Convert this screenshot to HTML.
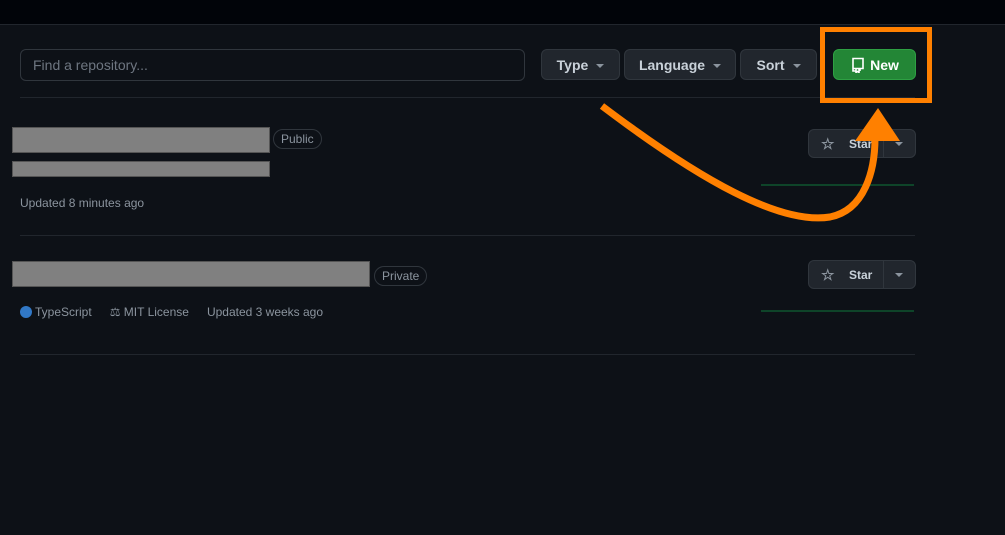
<!DOCTYPE html>
<html><head><style>
body{margin:0;width:1005px;height:535px;background:#0d1117;font-family:"Liberation Sans",sans-serif;position:relative;overflow:hidden;color:#c9d1d9}
.top{position:absolute;left:0;top:0;width:1005px;height:24px;background:#010409;border-bottom:1px solid #21262d}
.abs{position:absolute}
.inp{left:20px;top:49px;height:30px;border:1px solid #30363d;border-radius:6px;background:#0d1117;color:#6e7681;font-size:14px;line-height:30px;padding-left:12px;width:491px}
.btn{top:49px;height:31px;border:1px solid #30363d;border-radius:6px;background:#21262d;color:#c9d1d9;font-size:14px;font-weight:bold;line-height:31px;text-align:center;box-sizing:border-box}
.car{display:inline-block;width:0;height:0;border-left:4px solid transparent;border-right:4px solid transparent;border-top:4px solid #8b949e;vertical-align:middle;margin-left:8px}
.hr{height:1px;background:#21262d;left:20px;width:895px}
.gray{background:#808080;border:1px solid #555}
.badge{border:1px solid #30363d;border-radius:12px;font-size:12px;color:#8b949e;padding:0 7px;height:18px;line-height:18px}
.meta{font-size:12px;color:#8b949e}
.star{width:108px;height:29px;border:1px solid #30363d;border-radius:6px;background:#21262d;box-sizing:border-box;font-size:12px;font-weight:bold;color:#c9d1d9}
</style></head><body>
<div class="top"></div>
<div class="abs inp">Find a repository...</div>
<div class="abs btn" style="left:541px;width:79px">Type<span class="car"></span></div>
<div class="abs btn" style="left:624px;width:112px">Language<span class="car"></span></div>
<div class="abs btn" style="left:740px;width:77px">Sort<span class="car"></span></div>
<div class="abs btn" style="left:833px;width:83px;background:#238636;border-color:#2ea043;color:#fff">
<svg width="16" height="16" viewBox="0 0 16 16" style="vertical-align:-3px;margin-right:4px"><path d="M3 1.5h10v10H3zM3 11.5v2.5h3M10 11.5v2.5M6 12v3.5l1.5-1 1.5 1V12" fill="none" stroke="#fff" stroke-width="1.6"/></svg>New</div>
<div class="abs hr" style="top:97px"></div>
<div class="abs gray" style="left:12px;top:127px;width:256px;height:24px"></div>
<div class="abs badge" style="left:273px;top:129px">Public</div>
<div class="abs gray" style="left:12px;top:161px;width:256px;height:14px"></div>
<div class="abs meta" style="left:20px;top:196px">Updated 8 minutes ago</div>
<div class="abs star" style="left:808px;top:129px"><span class="abs" style="left:12px;top:5px;font-size:15px;color:#8b949e">☆</span><span class="abs" style="left:40px;top:7px">Star</span><span class="abs" style="left:74px;top:0;width:1px;height:27px;background:#30363d"></span><span class="abs" style="left:86px;top:12px;border-left:4px solid transparent;border-right:4px solid transparent;border-top:4px solid #8b949e"></span></div>
<div class="abs" style="left:761px;top:184px;width:153px;height:2px;background:#0e4429"></div>
<div class="abs hr" style="top:235px"></div>
<div class="abs gray" style="left:12px;top:261px;width:356px;height:24px"></div>
<div class="abs badge" style="left:374px;top:266px">Private</div>
<div class="abs meta" style="left:20px;top:305px"><span style="display:inline-block;width:12px;height:12px;border-radius:50%;background:#3178c6;vertical-align:-2px;margin-right:3px"></span>TypeScript<span style="margin-left:18px">⚖ MIT License</span><span style="margin-left:18px">Updated 3 weeks ago</span></div>
<div class="abs star" style="left:808px;top:260px"><span class="abs" style="left:12px;top:5px;font-size:15px;color:#8b949e">☆</span><span class="abs" style="left:40px;top:7px">Star</span><span class="abs" style="left:74px;top:0;width:1px;height:27px;background:#30363d"></span><span class="abs" style="left:86px;top:12px;border-left:4px solid transparent;border-right:4px solid transparent;border-top:4px solid #8b949e"></span></div>
<div class="abs" style="left:761px;top:310px;width:153px;height:2px;background:#0e4429"></div>
<div class="abs hr" style="top:354px"></div>
<svg class="abs" style="left:0;top:0" width="1005" height="535">
<rect x="822.5" y="29.5" width="107" height="71" fill="none" stroke="#ff8000" stroke-width="5"/>
<path d="M602 106 C700 180 780 225 830 217 C865 210 875 170 875 138" fill="none" stroke="#ff8000" stroke-width="7"/>
<polygon points="878,108 855,141 900,141" fill="#ff8000"/>
</svg>
</body></html>
